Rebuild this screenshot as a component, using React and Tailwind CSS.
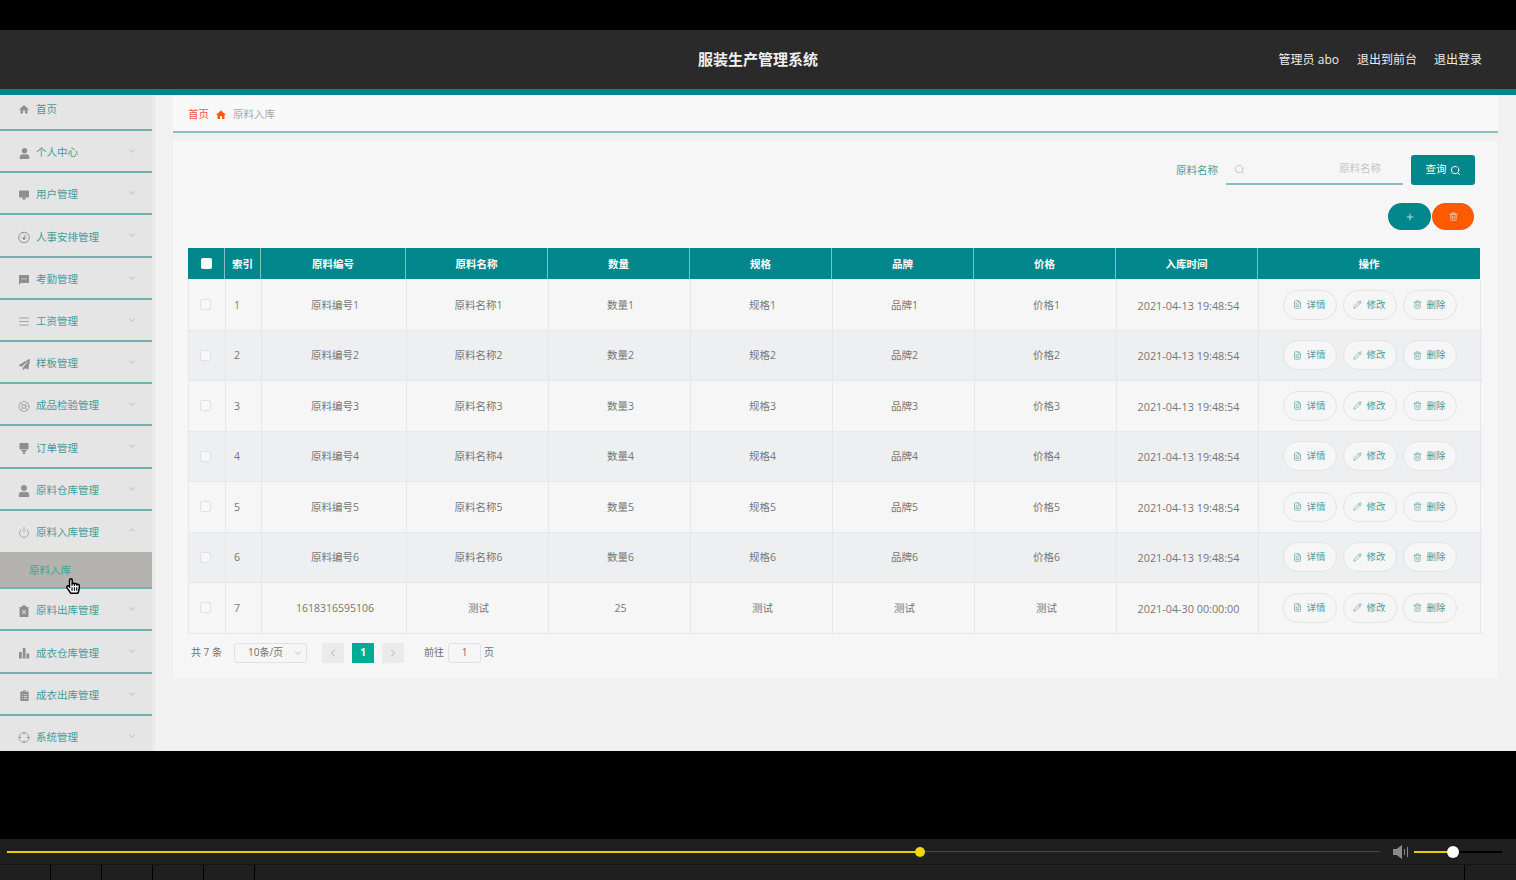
import React from 'react'
import {
  ChevronDown, ChevronUp, ChevronLeft, ChevronRight, Search, Plus, Trash2, FileText, Pencil,
  LifeBuoy, Power, Crosshair, AlignJustify,
} from 'lucide-react'
import { FaUser, FaPaperPlane, FaHandPointer, FaRegHandPointer, FaClipboardList } from 'react-icons/fa'
import { MdHome, MdSms, MdDesktopWindows } from 'react-icons/md'

const cjk = { fontFamily: '"Open Sans", "Noto Sans CJK SC", sans-serif' }

function GaugeIcon({ size }) {
  return (
    <svg width={size} height={size} viewBox="0 0 24 24" fill="none" stroke="currentColor" strokeWidth="2">
      <circle cx="12" cy="12" r="10.5" />
      <path d="M12 13l3-6" />
      <circle cx="12" cy="14" r="2" fill="currentColor" />
      <path d="M6 12h1M17 12h1M12 5v1" />
    </svg>
  )
}

function BrushIcon({ size }) {
  return (
    <svg width={size} height={size} viewBox="0 0 24 24" fill="currentColor">
      <rect x="3" y="1" width="18" height="13" rx="1" />
      <path d="M7 15h10v3h-3v5h-4v-5H7z" />
    </svg>
  )
}

function ClipboardXIcon({ size }) {
  return (
    <svg width={size} height={size} viewBox="0 0 24 24" fill="currentColor">
      <path d="M8 1h8v3h5v20H3V4h5z" />
      <path d="M8.5 10l7 8M15.5 10l-7 8" stroke="#e5e5e5" strokeWidth="2" fill="none" />
    </svg>
  )
}

function BarsIcon({ size }) {
  return (
    <svg width={size} height={size} viewBox="0 0 24 24" fill="currentColor">
      <rect x="2" y="10" width="5.5" height="13" />
      <rect x="9.5" y="2" width="5.5" height="21" />
      <rect x="17" y="13" width="5.5" height="10" />
    </svg>
  )
}

function SpeakerIcon() {
  return (
    <svg width="16" height="14" viewBox="0 0 16 14" className="text-[#8a8a8a]" fill="currentColor">
      <path d="M0 4h3.5L9 0v14L3.5 10H0z" />
      <rect x="11" y="4" width="1" height="6" />
      <rect x="14" y="2" width="1" height="10" />
    </svg>
  )
}

const menu = [
  { name: '首页', Icon: MdHome, size: 15, first: true },
  { name: '个人中心', Icon: FaUser, size: 11 },
  { name: '用户管理', Icon: MdDesktopWindows, size: 14 },
  { name: '人事安排管理', Icon: GaugeIcon, size: 13 },
  { name: '考勤管理', Icon: MdSms, size: 14 },
  { name: '工资管理', Icon: AlignJustify, size: 13, line: true },
  { name: '样板管理', Icon: FaPaperPlane, size: 11 },
  { name: '成品检验管理', Icon: LifeBuoy, size: 13, line: true },
  { name: '订单管理', Icon: BrushIcon, size: 13 },
  { name: '原料仓库管理', Icon: FaUser, size: 12 },
  { name: '原料入库管理', Icon: Power, size: 13, line: true, open: true },
  { name: '原料出库管理', Icon: ClipboardXIcon, size: 12 },
  { name: '成衣仓库管理', Icon: BarsIcon, size: 12 },
  { name: '成衣出库管理', Icon: FaClipboardList, size: 11 },
  { name: '系统管理', Icon: Crosshair, size: 13, line: true },
]

const headers = ['索引', '原料编号', '原料名称', '数量', '规格', '品牌', '价格', '入库时间', '操作']

const rows = [1, 2, 3, 4, 5, 6].map((n) => ({
  id: n,
  cells: [`原料编号${n}`, `原料名称${n}`, `数量${n}`, `规格${n}`, `品牌${n}`, `价格${n}`, '2021-04-13 19:48:54'],
}))
rows.push({ id: 7, cells: ['1618316595106', '测试', '25', '测试', '测试', '测试', '2021-04-30 00:00:00'] })

function MenuItem({ item }) {
  const { name, Icon, size, line, open, first } = item
  return (
    <div className={`flex items-center pl-[18px] pr-[15px] shrink-0 bg-[#e5e5e5] ${first ? 'h-[36px] pb-[5px]' : open ? 'h-[41.5px] pt-[2px]' : 'h-[42.2px] pt-[4px]'} ${open ? '' : 'border-b-2 border-[#6fb0b0]'}`}>
      <span className="w-[12px] flex justify-center text-[#8f8f8f]">
        {line ? <Icon size={size} strokeWidth={1.5} /> : <Icon size={size} />}
      </span>
      <span className="ml-[6px] text-[10.5px] text-[#479a9a]">{name}</span>
      {!first && (
        <span className="ml-auto text-[#a3b8b8] -mt-[4px]">
          {open ? <ChevronUp size={10} /> : <ChevronDown size={10} />}
        </span>
      )}
    </div>
  )
}

function Sidebar() {
  return (
    <aside className="w-[155px] shrink-0 bg-[#eaeaea] overflow-hidden">
      <div className="w-[152px] flex flex-col">
        {menu.map((item) => (
          <React.Fragment key={item.name}>
            <MenuItem item={item} />
            {item.open && (
              <div className="h-[37px] shrink-0 bg-[#b4b3b0] pl-[29px] pt-[2px] flex items-center border-b-2 border-[#6fb0b0] text-[10.5px] text-[#3fa58f]">
                原料入库
              </div>
            )}
          </React.Fragment>
        ))}
      </div>
    </aside>
  )
}

function ActionButton({ Icon, label }) {
  return (
    <button className="w-[54px] h-[30px] rounded-full border border-[#e3e4e6] bg-[#f6f6f6] flex items-center justify-center gap-[4px] text-[9.5px] text-[#4b9a9a]">
      <Icon size={9} className="text-[#6fa8a8]" />
      {label}
    </button>
  )
}

function Checkbox({ checked }) {
  return <span className={`block w-[11px] h-[11px] rounded-[2px] ${checked ? 'bg-white' : 'border border-[#dfe1e6] bg-[#f7f7f7]'}`} />
}

function DataTable() {
  return (
    <div className="w-[1294px]">
      <div className="grid grid-cols-[37px_36px_145px_142px_142px_142px_142px_142px_142px_222px] w-[1292px] h-[32px] pb-[1px] bg-[#00868b] bg-clip-content text-white text-[10.5px] font-bold">
        <div className="flex items-center justify-center border-r border-[#7fc2c4]">
          <Checkbox checked />
        </div>
        {headers.map((h, i) => (
          <div key={h} className={`flex items-center justify-center pt-[2px] ${i < headers.length - 1 ? 'border-r border-[#7fc2c4]' : ''}`}>
            {h}
          </div>
        ))}
      </div>
      <div className="border-l border-[#e6e7ea]">
        {rows.map((row) => (
          <div
            key={row.id}
            className={`grid grid-cols-[37px_36px_145px_142px_142px_142px_142px_142px_142px_222px] h-[50.5px] border-b border-[#e6e7ea] text-[10.5px] text-[#767676] ${row.id % 2 === 0 ? 'bg-[#eeeff1]' : 'bg-[#f6f6f6]'}`}
          >
            <div className="flex items-center justify-center pr-[3px] border-r border-[#e6e7ea]">
              <Checkbox />
            </div>
            <div className="flex items-center pl-[8px] pt-[2px] border-r border-[#e6e7ea]">{row.id}</div>
            {row.cells.map((c, i) => (
              <div key={i} className={`flex items-center justify-center pt-[2px] pl-[2px] border-r border-[#e6e7ea] ${i === 6 ? 'text-[10.8px]' : ''}`}>
                {c}
              </div>
            ))}
            <div className="flex items-center justify-center gap-[6px] border-r border-[#e6e7ea]">
              <ActionButton Icon={FileText} label="详情" />
              <ActionButton Icon={Pencil} label="修改" />
              <ActionButton Icon={Trash2} label="删除" />
            </div>
          </div>
        ))}
      </div>
    </div>
  )
}

function Pagination() {
  return (
    <div className="flex items-center h-[20px] mt-[9px] pl-[3px] text-[10px] text-[#707070]">
      <span className="w-[43px]">共 7 条</span>
      <div className="w-[73px] h-[20px] border border-[#dfe1e6] rounded-[3px] flex items-center pl-[13px] pr-[3px]">
        10条/页
        <ChevronDown size={10} className="ml-auto text-[#b5b5b5]" />
      </div>
      <span className="ml-[15px] w-[22px] h-[20px] bg-[#ebebeb] flex items-center justify-center text-[#b0b0b0]">
        <ChevronLeft size={12} />
      </span>
      <span className="ml-[8px] w-[22px] h-[20px] bg-[#00ab96] text-white font-bold flex items-center justify-center">1</span>
      <span className="ml-[8px] w-[22px] h-[20px] bg-[#ebebeb] flex items-center justify-center text-[#b0b0b0]">
        <ChevronRight size={12} />
      </span>
      <span className="ml-[20px]">前往</span>
      <span className="ml-[4px] w-[33px] h-[20px] border border-[#dfe1e6] rounded-[3px] flex items-center justify-center">1</span>
      <span className="ml-[3px]">页</span>
    </div>
  )
}

function Player() {
  return (
    <div className="h-[41px] shrink-0 bg-[#1f1f1f] flex flex-col">
      <div className="h-[26px] flex items-center pl-[7px] border-b border-[#151515]">
        <div className="w-[913px] h-[2px] bg-[#e6cf00]" />
        <span className="relative z-10 w-[10px] h-[10px] -ml-[5px] rounded-full bg-[#f2d800] shrink-0" />
        <div className="w-[455px] h-[1px] bg-[#4a4a4a]" />
        <span className="ml-[13px]"><SpeakerIcon /></span>
        <div className="ml-[5px] w-[39px] h-[2px] bg-[#e6cf00]" />
        <span className="w-[12px] h-[12px] -ml-[6px] rounded-full bg-white shrink-0" />
        <div className="w-[43px] h-[2px] bg-black" />
      </div>
      <div className="flex-1 flex">
        {[0, 1, 2, 3, 4].map((i) => (
          <div key={i} className="w-[51px] border-r border-black" />
        ))}
        <div className="w-[1210px] border-r border-black" />
      </div>
    </div>
  )
}

export default function App() {
  return (
    <div className="h-[880px] w-[1516px] overflow-hidden bg-black flex flex-col" style={cjk}>
      <div className="h-[30px] shrink-0" />

      {/* Header */}
      <header className="h-[65px] shrink-0 bg-[#2a2a2a] border-b-[6px] border-[#00868b] flex items-center relative pr-[34px]">
        <h1 className="absolute left-0 right-0 text-center text-[15px] font-bold text-[#f0f0f0]">服装生产管理系统</h1>
        <div className="ml-auto flex items-center gap-[17px] text-[12px] text-[#eeeeee] relative">
          <span className="mr-[1px]">管理员 abo</span>
          <span>退出到前台</span>
          <span>退出登录</span>
        </div>
      </header>

      {/* Body */}
      <div className="h-[656px] shrink-0 flex bg-[#f0f0f0] relative">
        <Sidebar />
        <main className="flex-1 min-w-0 pl-[18px] pr-[18px] bg-[#f1f1f1]">
          <div className="h-[38px] bg-[#f9f9f9] border-b-2 border-[#8dbdbd] flex items-center pl-[15px] pt-[3px] text-[10.5px]">
            <span className="text-[#ec5a45]">首页</span>
            <MdHome size={12} className="mx-[6px] text-[#ff5a00]" />
            <span className="text-[#a8a8a8]">原料入库</span>
          </div>
          <section className="mt-[8px] h-[537px] bg-[#f6f6f6] pl-[15px] pr-[16px] pt-[14px]">
            <div className="flex items-center justify-end h-[30px] pr-[7px] text-[10.5px]">
              <span className="text-[#4b9a9a] pt-[1px]">原料名称</span>
              <div className="ml-[8px] w-[177px] h-[30px] border-b-2 border-[#8dbdbd] flex items-center pl-[8px] pr-[22px] text-[#c4c4c4]">
                <Search size={11} className="text-[#c0c4c4]" />
                <span className="ml-auto">原料名称</span>
              </div>
              <button className="ml-[8px] w-[64px] h-[30px] bg-[#00868b] rounded-[3px] text-white flex items-center justify-center gap-[3px]">
                查询
                <Search size={11} />
              </button>
            </div>
            <div className="flex justify-end mt-[18px] h-[27px] pr-[8px] gap-[1px]">
              <button className="w-[43px] rounded-full bg-[#00868b] flex items-center justify-center text-[#d8eeee]">
                <Plus size={10} />
              </button>
              <button className="w-[42px] rounded-full bg-[#ff5a00] flex items-center justify-center text-[#ffe0cc]">
                <Trash2 size={9} />
              </button>
            </div>
            <div className="mt-[18px]">
              <DataTable />
              <Pagination />
            </div>
          </section>
        </main>

        {/* Mouse pointer caught in the recording */}
        <div className="absolute left-[65px] top-[483px] w-[12px] h-[18px]">
          <FaHandPointer size={16} className="absolute inset-0 text-white" />
          <FaRegHandPointer size={16} className="absolute inset-0 text-black" />
        </div>
      </div>

      <div className="flex-1" />
      <Player />
    </div>
  )
}
